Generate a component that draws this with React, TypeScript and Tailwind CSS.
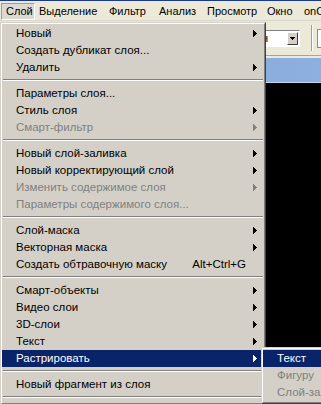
import React from "react";

type Item =
  | { sep: true }
  | { label: string; arrow?: boolean; disabled?: boolean; shortcut?: string; hl?: boolean; sep?: false };

const items: Item[] = [
  { label: "Новый", arrow: true },
  { label: "Создать дубликат слоя..." },
  { label: "Удалить", arrow: true },
  { sep: true },
  { label: "Параметры слоя..." },
  { label: "Стиль слоя", arrow: true },
  { label: "Смарт-фильтр", arrow: true, disabled: true },
  { sep: true },
  { label: "Новый слой-заливка", arrow: true },
  { label: "Новый корректирующий слой", arrow: true },
  { label: "Изменить содержимое слоя", arrow: true, disabled: true },
  { label: "Параметры содержимого слоя...", disabled: true },
  { sep: true },
  { label: "Слой-маска", arrow: true },
  { label: "Векторная маска", arrow: true },
  { label: "Создать обтравочную маску", shortcut: "Alt+Ctrl+G" },
  { sep: true },
  { label: "Смарт-объекты", arrow: true },
  { label: "Видео слои", arrow: true },
  { label: "3D-слои", arrow: true },
  { label: "Текст", arrow: true },
  { label: "Растрировать", arrow: true, hl: true },
  { sep: true },
  { label: "Новый фрагмент из слоя" },
  { sep: true },
];

const subItems: Item[] = [
  { label: "Текст", hl: true },
  { label: "Фигуру", disabled: true },
  { label: "Слой-заливку", disabled: true },
];

function Arrow({ color }: { color: string }) {
  return (
    <svg width="4" height="7" viewBox="0 0 4 7" shapeRendering="crispEdges">
      <rect x="0" y="0" width="1" height="7" fill={color} />
      <rect x="1" y="1" width="1" height="5" fill={color} />
      <rect x="2" y="2" width="1" height="3" fill={color} />
      <rect x="3" y="3" width="1" height="1" fill={color} />
    </svg>
  );
}

function MenuRows({ list }: { list: Item[] }) {
  return (
    <>
      {list.map((it, i) => {
        if (it.sep) {
          return (
            <div key={i} className="h-[9px] pt-[3px] px-[1px]">
              <div className="h-[1px] bg-[#808080]" />
              <div className="h-[1px] bg-white" />
            </div>
          );
        }
        const cls = it.hl
          ? "bg-[#0a246a] text-white"
          : it.disabled
          ? "text-[#808080]"
          : "text-black";
        const arrowColor = it.hl ? "#ffffff" : it.disabled ? "#808080" : "#000000";
        return (
          <div key={i} className={`flex items-center h-[17px] pl-[14px] pr-[7px] ${cls}`}>
            <span className="flex-1 whitespace-nowrap">{it.label}</span>
            {it.shortcut && <span className="mr-[7px] whitespace-nowrap">{it.shortcut}</span>}
            <span className="w-[4px] h-[7px] flex">{it.arrow && <Arrow color={arrowColor} />}</span>
          </div>
        );
      })}
    </>
  );
}

function MenuBox({ children, className }: { children: React.ReactNode; className: string }) {
  return (
    <div
      className={`absolute text-[11.5px] border border-t-[#d4d0c8] border-l-[#d4d0c8] border-r-[#404040] border-b-[#404040] bg-[#d4d0c8] ${className}`}
    >
      <div className="border border-t-white border-l-white border-r-[#808080] border-b-[#808080] py-[1px]">
        {children}
      </div>
    </div>
  );
}

const menubar = [
  { t: "Слой", w: "w-[34px]", active: true },
  { t: "Выделение", w: "w-[70px]" },
  { t: "Фильтр", w: "w-[50px]" },
  { t: "Анализ", w: "w-[48px]" },
  { t: "Просмотр", w: "w-[60px]" },
  { t: "Окно", w: "w-[37px]" },
  { t: "onOne", w: "w-[50px]" },
];

export default function App() {
  return (
    <div
      className="relative w-[321px] h-[404px] overflow-hidden bg-[#ece9d8] text-[11px] leading-none"
      style={{ fontFamily: '"Liberation Sans", Arial, sans-serif' }}
    >
      <div className="h-[1px] bg-[#1c3a8a]" />
      {/* menu bar */}
      <div className="h-[20px] flex pl-[1px] border-b border-[#d8d5cc] bg-[#ece9d8]">
        {menubar.map((m) => (
          <div
            key={m.t}
            className={`${m.w} shrink-0 h-[17px] mt-[2px] flex items-center pl-[4px] whitespace-nowrap text-black ${
              m.active ? "border border-t-[#9d9d9d] border-l-[#9d9d9d] border-r-white border-b-white bg-[#dcd9d2] pl-[3px]" : ""
            }`}
          >
            {m.t}
          </div>
        ))}
      </div>
      {/* options toolbar */}
      <div className="h-[35px] flex items-center bg-[#ece9d8] border-b border-[#a5a39c]">
        <div className="shrink-0 ml-[199px] w-[101px] h-[17px] flex border border-t-[#808080] border-l-[#808080] border-r-white border-b-white bg-white">
          <div className="flex-1 flex items-center justify-end pr-[19px] overflow-hidden whitespace-nowrap text-black">
            Нормальн
          </div>
          <div className="shrink-0 w-[11px] h-[13px] mt-[1px] mr-[1px] flex items-center justify-center bg-[#d4d0c8] border border-t-white border-l-white border-r-[#404040] border-b-[#404040]">
            <svg width="5" height="3" viewBox="0 0 5 3" shapeRendering="crispEdges">
              <rect x="0" y="0" width="5" height="1" fill="#000" />
              <rect x="1" y="1" width="3" height="1" fill="#000" />
              <rect x="2" y="2" width="1" height="1" fill="#000" />
            </svg>
          </div>
        </div>
        <div className="shrink-0 ml-[11px] w-[2px] h-[26px] flex">
          <div className="w-[1px] bg-[#a0a0a0]" />
          <div className="w-[1px] bg-white" />
        </div>
        <div className="shrink-0 ml-[4px] w-[20px] h-[19px] border border-[#8c8c8c] bg-white" />
      </div>
      {/* document window */}
      <div className="h-[2px] bg-[#ece9d8]" />
      <div className="h-[24px] bg-gradient-to-r from-[#7b9fd5] to-[#8eb0e0]" />
      <div className="h-[1px] bg-[#c4d4ee]" />
      <div className="h-[330px] bg-black" />

      {/* dropdown menu */}
      <MenuBox className="left-0 top-[22px] w-[266px]">
        <MenuRows list={items} />
      </MenuBox>
      {/* submenu */}
      <MenuBox className="left-[261px] top-[347px] w-[130px]">
        <MenuRows list={subItems} />
      </MenuBox>
    </div>
  );
}
